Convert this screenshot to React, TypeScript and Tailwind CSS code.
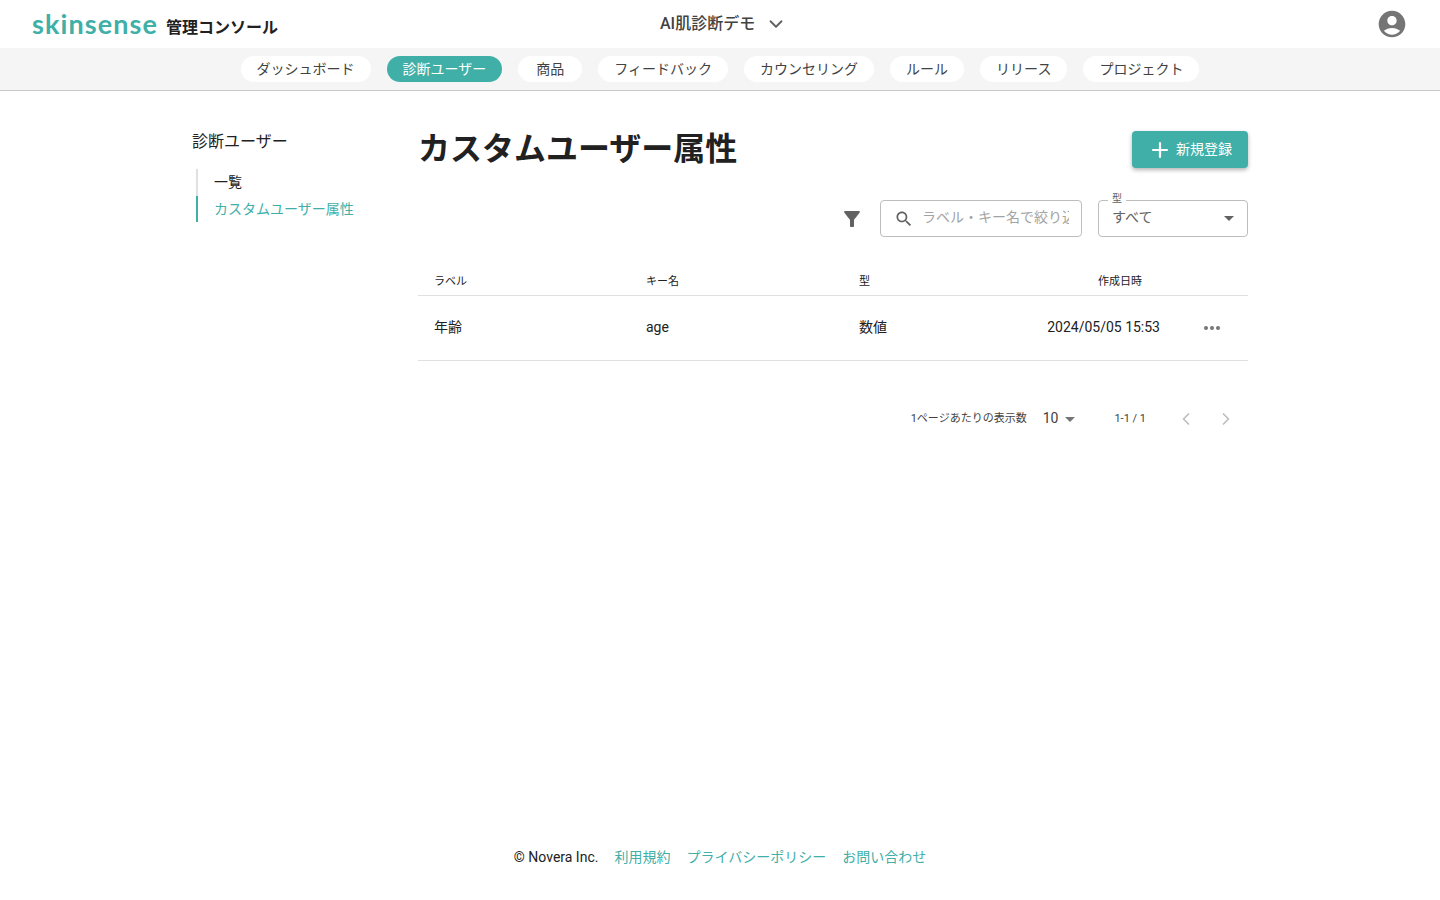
import { ChevronDown, ChevronLeft, ChevronRight, Plus } from "lucide-react";

const font = "font-['Roboto','Noto_Sans_CJK_JP',sans-serif]";

const navItems = [
  { name: "ダッシュボード", active: false },
  { name: "診断ユーザー", active: true },
  { name: "商品", active: false },
  { name: "フィードバック", active: false },
  { name: "カウンセリング", active: false },
  { name: "ルール", active: false },
  { name: "リリース", active: false },
  { name: "プロジェクト", active: false },
];

function Header() {
  return (
    <header className="relative flex h-12 items-center justify-between pl-8 pr-8">
      <div className="flex items-baseline gap-2 pb-[2px]">
        <span className="font-['Lato',sans-serif] text-[27px] font-bold leading-none tracking-[1.1px] text-[#40afa8]">
          skinsense
        </span>
        <span className="-translate-y-px text-base font-bold leading-none text-[#212121]">管理コンソール</span>
      </div>
      <div className="absolute left-[660px] top-0 flex h-[47px] items-center gap-[10px] text-base font-medium text-[#424242]">
        <span>AI肌診断デモ</span>
        <ChevronDown size={22} strokeWidth={2} className="text-[#616161]" />
      </div>
      <svg width="32" height="32" viewBox="0 0 24 24" fill="#757575">
        <path d="M12 2C6.48 2 2 6.48 2 12s4.48 10 10 10 10-4.48 10-10S17.52 2 12 2zm0 4c1.93 0 3.5 1.57 3.5 3.5S13.93 13 12 13s-3.5-1.57-3.5-3.5S10.07 6 12 6zm0 14c-2.03 0-4.43-.82-6.14-2.88C7.55 15.8 9.68 15 12 15s4.45.8 6.14 2.12C16.43 19.18 14.03 20 12 20z" />
      </svg>
    </header>
  );
}

function NavBar() {
  return (
    <nav className="flex h-[43px] items-start justify-center gap-4 border-b border-[#c8c8c8] bg-[#f5f5f5] pt-2">
      {navItems.map((item) => (
        <a
          key={item.name}
          className={
            "flex h-[26px] min-w-16 items-center justify-center rounded-full px-4 text-sm " +
            (item.active ? "bg-[#40afa8] text-white" : "bg-white text-[#424242]")
          }
        >
          {item.name}
        </a>
      ))}
    </nav>
  );
}

function Sidebar() {
  return (
    <aside className="w-[226px] shrink-0 pt-[39px]">
      <h2 className="text-base leading-6 text-[#212121]">診断ユーザー</h2>
      <ul className="ml-1 mt-[15px] text-sm">
        <li className="flex h-[27px] items-center border-l-2 border-[#e0e0e0] pb-[2px] pl-4 text-[#212121]">一覧</li>
        <li className="flex h-[26px] items-center border-l-2 border-[#40afa8] pl-4 text-[#40afa8]">カスタムユーザー属性</li>
      </ul>
    </aside>
  );
}

function Filters() {
  return (
    <div className="mt-8 flex items-center justify-end">
      <svg width="24" height="24" viewBox="0 0 24 24" fill="#616161" className="mr-4">
        <path d="M4.25 5.61C6.27 8.2 10 13 10 13v6c0 .55.45 1 1 1h2c.55 0 1-.45 1-1v-6s3.72-4.8 5.74-7.39c.51-.66.04-1.61-.79-1.61H5.04c-.83 0-1.3.95-.79 1.61z" />
      </svg>
      <div className="flex h-[37px] w-[202px] items-center rounded border border-[#bdbdbd] pl-[13px] pr-3">
        <svg width="20" height="20" viewBox="0 0 24 24" fill="#616161" className="shrink-0">
          <path d="M15.5 14h-.79l-.28-.27C15.41 12.59 16 11.11 16 9.5 16 5.91 13.09 3 9.5 3S3 5.91 3 9.5 5.91 16 9.5 16c1.61 0 3.09-.59 4.23-1.57l.27.28v.79l5 4.99L20.49 19l-4.99-5zm-6 0C7.01 14 5 11.99 5 9.5S7.01 5 9.5 5 14 7.01 14 9.5 11.99 14 9.5 14z" />
        </svg>
        <span className="ml-2 overflow-hidden whitespace-nowrap pb-[3px] text-sm text-[#a3a3a3]">ラベル・キー名で絞り込み</span>
      </div>
      <div className="relative ml-4 flex h-[37px] w-[150px] items-center justify-between rounded border border-[#bdbdbd] pl-[13px] pr-[6px] text-sm text-[#616161]">
        <span className="absolute -top-[9px] left-[9px] bg-white px-1 text-[10px] leading-[14px] text-[#616161]">型</span>
        <span className="pb-[3px]">すべて</span>
        <svg width="24" height="24" viewBox="0 0 24 24" fill="#616161" className="-mt-[2px]">
          <path d="M7 10l5 5 5-5z" />
        </svg>
      </div>
    </div>
  );
}

function Table() {
  const cols = "grid grid-cols-[212px_212px_120px_1fr_72px] items-center";
  return (
    <div className="mt-[26px]">
      <div className={cols + " h-[33px] border-b border-[#e0e0e0] pt-[6px] text-[11px] text-[#212121]"}>
        <div className="pl-4">ラベル</div>
        <div className="pl-4">キー名</div>
        <div className="pl-[17px]">型</div>
        <div className="pr-[34px] text-right">作成日時</div>
        <div />
      </div>
      <div className={cols + " h-[65px] border-b border-[#e0e0e0] text-sm text-[#212121]"}>
        <div className="pb-[2px] pl-4">年齢</div>
        <div className="pb-[2px] pl-4">age</div>
        <div className="pb-[2px] pl-[17px]">数値</div>
        <div className="whitespace-nowrap pb-[2px] pr-4 text-right">2024/05/05 15:53</div>
        <div className="flex justify-center gap-[2px]">
          <span className="h-1 w-1 rounded-full bg-[#757575]" />
          <span className="h-1 w-1 rounded-full bg-[#757575]" />
          <span className="h-1 w-1 rounded-full bg-[#757575]" />
        </div>
      </div>
    </div>
  );
}

function Pagination() {
  return (
    <div className="mt-[41px] flex h-8 items-center justify-end text-[#424242]">
      <span className="pt-[3px] text-[11px]">1ページあたりの表示数</span>
      <span className="ml-4 text-sm">10</span>
      <svg width="24" height="24" viewBox="0 0 24 24" fill="#757575" className="mt-[2px]">
        <path d="M7 10l5 5 5-5z" />
      </svg>
      <span className="ml-8 pt-[2px] text-[11px]">1-1 / 1</span>
      <ChevronLeft size={20} strokeWidth={2} className="ml-[30px] mt-[1px] text-[#bdbdbd]" />
      <ChevronRight size={20} strokeWidth={2} className="ml-5 mr-3 mt-[1px] text-[#bdbdbd]" />
    </div>
  );
}

function Footer() {
  return (
    <footer className="mt-auto flex h-[53px] items-start justify-center gap-4 text-sm">
      <span className="text-[#212121]">© Novera Inc.</span>
      <a className="text-[#40afa8]">利用規約</a>
      <a className="text-[#40afa8]">プライバシーポリシー</a>
      <a className="text-[#40afa8]">お問い合わせ</a>
    </footer>
  );
}

export default function App() {
  return (
    <div className={font + " flex min-h-screen flex-col bg-white"}>
      <Header />
      <NavBar />
      <div className="mx-auto flex w-[1056px]">
        <Sidebar />
        <main className="flex-1 pt-10">
          <div className="flex items-start justify-between">
            <h1 className="text-[32px] font-bold leading-[36px] text-[#212121]">カスタムユーザー属性</h1>
            <button className="flex h-[37px] w-[116px] items-center gap-1 rounded bg-[#40afa8] pl-4 text-sm text-white shadow-[0_2px_4px_rgba(0,0,0,0.3)]">
              <Plus size={24} strokeWidth={2.2} />
              <span className="pb-[2px]">新規登録</span>
            </button>
          </div>
          <Filters />
          <Table />
          <Pagination />
        </main>
      </div>
      <Footer />
    </div>
  );
}
